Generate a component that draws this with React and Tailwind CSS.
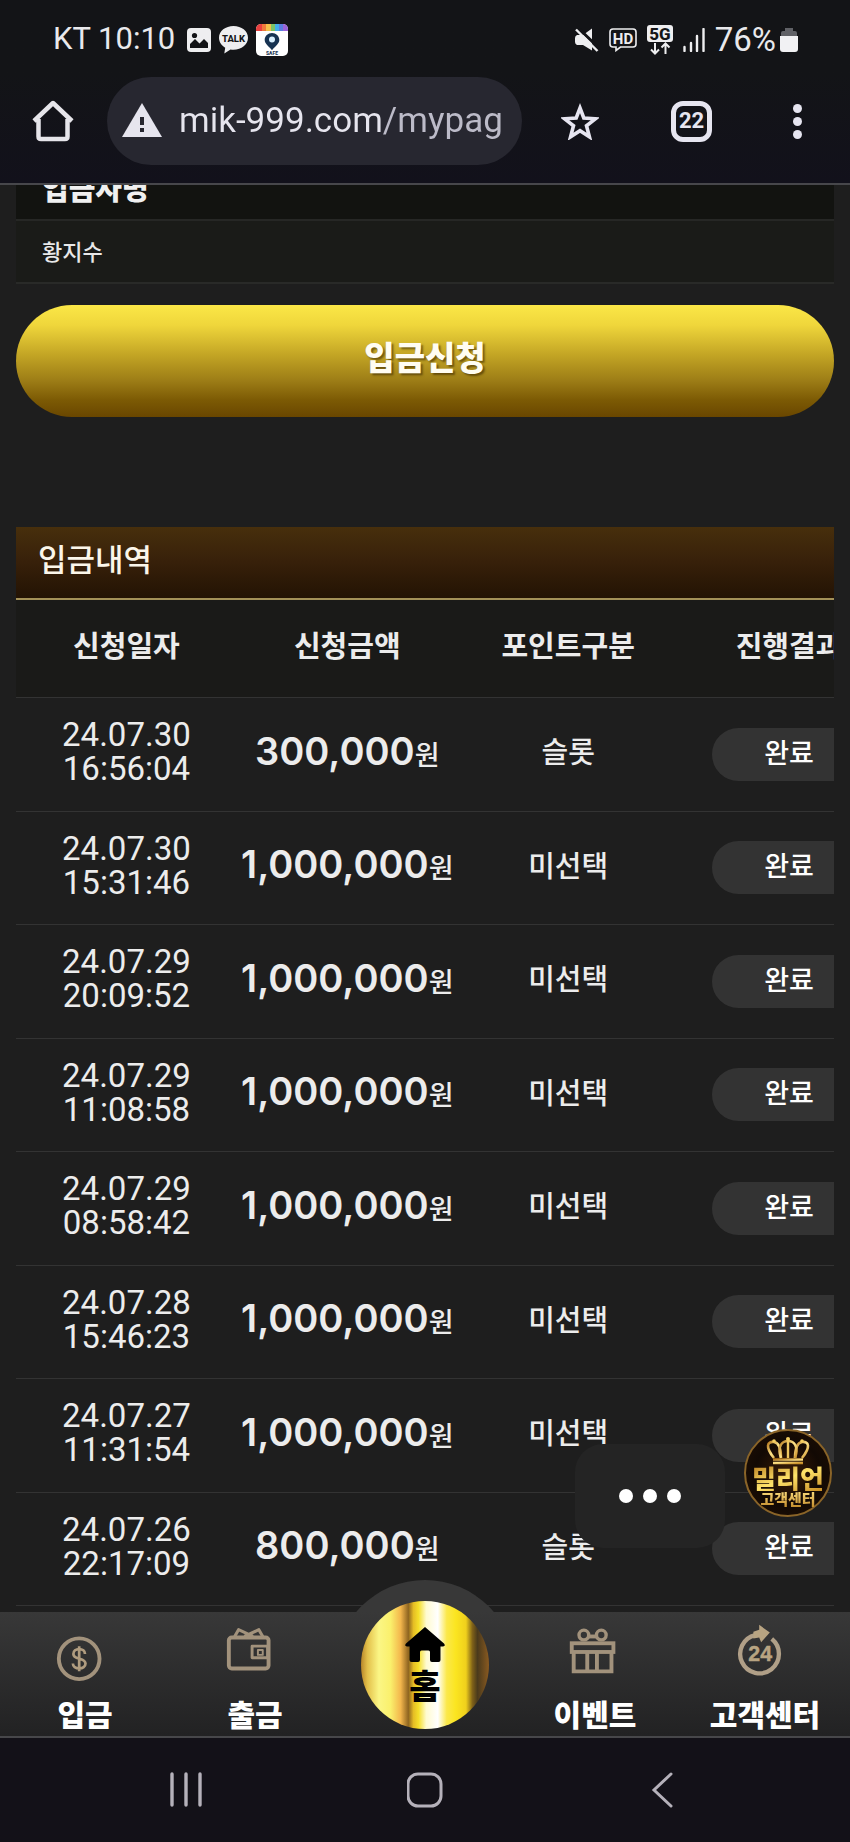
const deposits = [
  { date: '24.07.30', time: '16:56:04', amount: '300,000', type: '슬롯' },
  { date: '24.07.30', time: '15:31:46', amount: '1,000,000', type: '미선택' },
  { date: '24.07.29', time: '20:09:52', amount: '1,000,000', type: '미선택' },
  { date: '24.07.29', time: '11:08:58', amount: '1,000,000', type: '미선택' },
  { date: '24.07.29', time: '08:58:42', amount: '1,000,000', type: '미선택' },
  { date: '24.07.28', time: '15:46:23', amount: '1,000,000', type: '미선택' },
  { date: '24.07.27', time: '11:31:54', amount: '1,000,000', type: '미선택' },
  { date: '24.07.26', time: '22:17:09', amount: '800,000', type: '슬롯' },
]

const columns = ['신청일자', '신청금액', '포인트구분', '진행결과']

// ── Status bar icons ─────────────────────────────────────
const PictureIcon = () => (
  <svg className="h-6 w-6" viewBox="0 0 24 24" aria-hidden="true">
    <rect width="24" height="24" rx="4" fill="#eeeef0" />
    <circle cx="7.500" cy="7.500" r="2.600" fill="#131417" />
    <path d="M3 20v-4l5-5 4.500 4.500L17 11l4 4v5z" fill="#131417" />
  </svg>
)

const TalkIcon = () => (
  <svg className="h-7 w-[29px]" viewBox="0 0 29 28" aria-hidden="true">
    <path
      d="M14.500 0C6.500 0 0 5 0 11.800c0 4.200 2.500 7.800 6.200 9.900L5.300 27.600l6.200-4.200c1 .2 2 .3 3 .3C22.500 23.700 29 18.500 29 11.800 29 5 22.500 0 14.500 0z"
      fill="#eeeef0"
    />
    <text x="14.500" y="15.500" textAnchor="middle" fontFamily="Roboto, sans-serif" fontSize="9.500" fontWeight="800" fill="#131417">
      TALK
    </text>
  </svg>
)

const SafeIcon = () => (
  <svg className="h-8 w-8" viewBox="0 0 32 32" aria-hidden="true">
    <rect width="32" height="32" rx="5" fill="#ffffff" />
    <path d="M5 0h2v7H0V5a5 5 0 0 1 5-5z" fill="#e8403f" />
    <path d="M6 0h4v7H6z" fill="#ee7a3c" />
    <path d="M10 0h5v7h-5z" fill="#f2c04a" />
    <path d="M15 0h4v7h-4z" fill="#7cc466" />
    <path d="M19 0h4v7h-4z" fill="#43aee8" />
    <path d="M23 0h4v7h-4z" fill="#5b7de0" />
    <path d="M27 0a5 5 0 0 1 5 5v2h-5z" fill="#9a63d8" />
    <path d="M16 9c-4 0-7.300 3-7.300 7 0 3.600 3.500 5.600 7.300 10.200 3.800-4.600 7.300-6.600 7.300-10.200 0-4-3.300-7-7.300-7z" fill="#173352" />
    <circle cx="16" cy="15.500" r="3" fill="#d8f0ff" />
    <text x="16" y="30.500" textAnchor="middle" fontFamily="Roboto, sans-serif" fontSize="5" fontWeight="800" fill="#173352">
      SAFE
    </text>
  </svg>
)

const MuteIcon = () => (
  <svg className="h-6 w-6" viewBox="0 0 24 24" aria-hidden="true">
    <path d="M2 7h6l9-6.500v22L8 17H2q-2-1-2-3v-4q0-2 2-3z" fill="#eeeef0" />
    <path d="M2 -1L25 21" stroke="#131417" strokeWidth="3" />
    <path d="M1 1.500L22.500 23" stroke="#eeeef0" strokeWidth="2.400" />
  </svg>
)

const HdIcon = () => (
  <svg className="h-6 w-7" viewBox="0 0 28 24" aria-hidden="true">
    <path
      d="M4 1h20q3 0 3 3v12q0 3-3 3H11.500L7 22.500V19H4q-3 0-3-3V4q0-3 3-3z"
      fill="none"
      stroke="#eeeef0"
      strokeWidth="1.600"
    />
    <text x="14" y="15.500" textAnchor="middle" fontFamily="Roboto, sans-serif" fontSize="15" fontWeight="700" fill="#eeeef0">
      HD
    </text>
  </svg>
)

const FiveGIcon = () => (
  <svg className="h-[30px] w-[26px]" viewBox="0 0 26 30" aria-hidden="true">
    <rect width="26" height="17" rx="3" fill="#eeeef0" />
    <text x="13" y="14.500" textAnchor="middle" fontFamily="Roboto, sans-serif" fontSize="17" fontWeight="800" fill="#131417">
      5G
    </text>
    <path d="M8 18v10M4 24.500l4 4 4-4M18.500 29V19M14.500 22.500l4-4 4 4" fill="none" stroke="#eeeef0" strokeWidth="2" />
  </svg>
)

const SignalIcon = () => (
  <svg className="h-6 w-[22px]" viewBox="0 0 22 24" aria-hidden="true">
    <path d="M1.500 23v-4M8 23v-8M14 23V8M20.500 23V1" stroke="#eeeef0" strokeWidth="2.400" strokeLinecap="round" />
  </svg>
)

const BatteryIcon = () => (
  <svg className="h-[26px] w-[18px]" viewBox="0 0 18 26" aria-hidden="true">
    <path d="M5 1h8v3h2q2 0 2 2v4H1V6q0-2 2-2h2z" fill="#606166" />
    <path d="M0 9h18v13q0 3-3 3H3q-3 0-3-3z" fill="#f1f1f3" />
  </svg>
)

// ── Browser bar icons ────────────────────────────────────
const HomeOutlineIcon = () => (
  <svg className="h-[42px] w-[42px]" viewBox="0 0 42 42" aria-hidden="true">
    <path
      d="M2 21L21 3l19 18M6.500 19v17.500q0 2.500 2.500 2.500h24q2.500 0 2.500-2.500V19"
      fill="none"
      stroke="#e6e5ea"
      strokeWidth="4.500"
      strokeLinejoin="round"
    />
  </svg>
)

const WarningIcon = () => (
  <svg className="h-9 w-[42px] shrink-0" viewBox="0 0 42 36" aria-hidden="true">
    <path d="M21 0l20 34H1z" fill="#e6e5ee" />
    <path d="M21 14v8M21 25v4" stroke="#272730" strokeWidth="4" />
  </svg>
)

const StarIcon = () => (
  <svg className="h-[38px] w-[38px]" viewBox="0 0 38 38" aria-hidden="true">
    <path
      d="M19 6l3.800 10 11.700.8-9 7 2.900 11L19 28.700 9.600 34.800l2.900-11-9-7 11.700-.8z"
      fill="none"
      stroke="#e6e5f0"
      strokeWidth="3.600"
    />
  </svg>
)

// ── Bottom menu icons ────────────────────────────────────
const DepositIcon = () => (
  <svg className="h-16 w-16" viewBox="0 0 64 64" aria-hidden="true">
    <circle cx="26" cy="40" r="21" fill="none" stroke="#a2927c" strokeWidth="4" />
    <path
      d="M32 35c0-3-2.600-5-6-5s-6 2-6 5c0 6.500 12.500 3.500 12.500 10 0 3.200-2.800 5-6.500 5s-6.500-2-6.500-5M26 27v26"
      fill="none"
      stroke="#b09c7f"
      strokeWidth="2.800"
    />
  </svg>
)

const WithdrawIcon = () => (
  <svg className="h-16 w-16" viewBox="0 0 64 64" aria-hidden="true">
    <g fill="none" stroke="#a2927c" strokeWidth="4" strokeLinejoin="round">
      <rect x="5" y="18" width="41" height="32" rx="3" />
      <path d="M11 17l4-7 15 7M40 17l-4-7-15 7" strokeWidth="3.200" />
      <rect x="29" y="27" width="16" height="12" strokeWidth="3" />
      <rect x="35" y="31" width="5" height="5" strokeWidth="2" />
    </g>
  </svg>
)

const EventIcon = () => (
  <svg className="h-16 w-16" viewBox="0 0 64 64" aria-hidden="true">
    <g fill="none" stroke="#a2927c" strokeWidth="4">
      <rect x="8" y="24" width="43" height="9" />
      <path d="M10 33v20h39V33M24 33v20M34 33v20" />
      <circle cx="20.500" cy="15.500" r="5" strokeWidth="3.500" />
      <circle cx="38.500" cy="15.500" r="5" strokeWidth="3.500" />
      <path d="M25 17h9" />
    </g>
  </svg>
)

const SupportIcon = () => (
  <svg className="h-16 w-16" viewBox="0 0 64 64" aria-hidden="true">
    <path d="M39 19.500A20 20 0 1 1 22 15.500" fill="none" stroke="#b09f87" strokeWidth="4.500" />
    <path d="M26 5l11 8-9 10-2-5-6 1v-7l6-2z" fill="#b8a482" />
    <text x="27" y="42" textAnchor="middle" fontFamily="Liberation Sans, sans-serif" fontSize="22" fill="#b8a482" stroke="#b8a482" strokeWidth="0.500">
      24
    </text>
  </svg>
)

const HomeSolidIcon = () => (
  <svg className="h-9 w-10" viewBox="0 0 40 36" aria-hidden="true">
    <path
      d="M20 0l19 16.500q2 2.500-1 3h-2.500V33q0 2-2 2H27q-2 0-2-2v-8q0-1.500-1.500-1.500h-7Q15 23.500 15 25v8q0 2-2 2H6.500q-2 0-2-2V19.500H2q-3-.5-1-3z"
      fill="#000000"
    />
  </svg>
)

const CrownIcon = () => (
  <svg className="h-7 w-11" viewBox="0 0 44 28" aria-hidden="true">
    <defs>
      <linearGradient id="crown" x1="0" y1="0" x2="1" y2="1">
        <stop offset="0" stopColor="#b57a20" />
        <stop offset="0.500" stopColor="#ffe58a" />
        <stop offset="1" stopColor="#c98f28" />
      </linearGradient>
    </defs>
    <g fill="none" stroke="url(#crown)" strokeWidth="2.600">
      <path d="M8 21C-1 10 1 4 8 5c6 1 7 8 7 16" />
      <path d="M36 21c9-11 7-17 0-16-6 1-7 8-7 16" />
      <path d="M15 21c-4-12 1-17 7-17s11 5 7 17" />
      <path d="M7 22.500h30M7 26h30" />
    </g>
    <path d="M22 4v17" stroke="#f0c860" strokeWidth="2.400" />
    <g fill="#f5cf62">
      <circle cx="22" cy="2" r="2" />
      <circle cx="8" cy="4" r="1.800" />
      <circle cx="36" cy="4" r="1.800" />
    </g>
  </svg>
)

// ── Sub-components ───────────────────────────────────────
const MenuLink = ({ href, icon: Icon, children }) => (
  <a href={href} className="flex flex-1 flex-col items-center gap-2 pt-2 text-[30px] leading-[46px] font-black text-white">
    <Icon />
    {children}
  </a>
)

const StatusBar = () => (
  <div className="flex h-[77px] items-center justify-between pt-0.5 pr-[52px] pl-[53px] font-['Roboto',sans-serif] text-[#e9e9ec]">
    <div className="flex items-center gap-2">
      <span className="mr-1 text-[31px]">KT 10:10</span>
      <PictureIcon />
      <TalkIcon />
      <SafeIcon />
    </div>
    <div className="flex items-center gap-2.5">
      <MuteIcon />
      <HdIcon />
      <FiveGIcon />
      <SignalIcon />
      <div className="flex items-center gap-1">
        <span className="text-[33px]">76%</span>
        <BatteryIcon />
      </div>
    </div>
  </div>
)

const BrowserBar = () => (
  <div className="flex h-[106px] items-start pr-8 pl-8 font-['Roboto',sans-serif]">
    <button type="button" aria-label="홈" className="flex h-[88px] w-[42px] items-center">
      <HomeOutlineIcon />
    </button>
    <div className="ml-[33px] flex h-[88px] flex-1 items-center gap-4 rounded-full bg-[#272730] pr-3 pl-3.5">
      <WarningIcon />
      <input
        type="text"
        aria-label="주소"
        defaultValue="mik-999.com/mypag"
        className="w-full min-w-0 bg-[linear-gradient(90deg,#e6e5ee_202px,#bcbbc8_202px)] bg-clip-text text-[35px] leading-[48px] text-transparent outline-none"
      />
    </div>
    <div className="ml-[39px] flex h-[88px] w-[257px] items-center justify-between">
      <button type="button" aria-label="북마크">
        <StarIcon />
      </button>
      <button
        type="button"
        className="ml-2 flex h-[41px] w-[41px] items-center justify-center rounded-xl border-[5px] border-[#e6e5f0] text-[22px] leading-none font-bold text-[#e6e5f0]"
      >
        22
      </button>
      <button type="button" aria-label="메뉴" className="flex w-[42px] flex-col items-center gap-1">
        <span className="h-[9px] w-[9px] rounded-full bg-[#e6e5f0]" />
        <span className="h-[9px] w-[9px] rounded-full bg-[#e6e5f0]" />
        <span className="h-[9px] w-[9px] rounded-full bg-[#e6e5f0]" />
      </button>
    </div>
  </div>
)

const DepositTable = () => (
  <section className="mt-[110px] overflow-hidden">
    <h2 className="flex h-[73px] items-center border-b-2 border-[#a39158] bg-linear-to-b from-[#472f0c] via-[#37200a] to-[#231304] pb-2 pl-[22px] text-[31px] font-medium text-[#fbf6ea]">
      입금내역
    </h2>
    <table className="w-[108%] table-fixed border-collapse text-center text-[29px] text-[#ececec]">
      <thead>
        <tr className="h-[97px] border-b border-[#333333] bg-[#1a1a18]">
          {columns.map((name) => (
            <th key={name} className="pb-2 font-bold">
              {name}
            </th>
          ))}
        </tr>
      </thead>
      <tbody>
        {deposits.map((row) => (
          <tr key={row.date + row.time} className="h-[114px] border-b border-[#333333] even:h-[113px]">
            <td className="pb-1 font-['Roboto',sans-serif] text-[33px] leading-[34px]">
              <span className="block">{row.date}</span>
              <span className="block">{row.time}</span>
            </td>
            <td className="pb-1 leading-[40px] whitespace-nowrap">
              <span className="font-['Inter',sans-serif] text-[38px] font-semibold">{row.amount}</span>
              <span className="text-[27px] font-medium">원</span>
            </td>
            <td className="pb-1.5 font-medium">{row.type}</td>
            <td>
              <span className="mx-auto flex h-[53px] w-[154px] items-center justify-center rounded-full bg-[#333333] pb-1 text-[27px] font-medium text-white">
                완료
              </span>
            </td>
          </tr>
        ))}
      </tbody>
    </table>
  </section>
)

// Bump and gold disc rise above the bar
const HomeButton = () => (
  <div className="relative flex flex-1 justify-center">
    <div className="absolute -top-8 h-8 w-[180px] overflow-hidden">
      <div className="h-[180px] rounded-full bg-[#383838]" />
    </div>
    <a
      href="#home"
      className="absolute -top-[11px] flex h-32 w-32 flex-col items-center rounded-full bg-[linear-gradient(90deg,#b8862a_0%,#e3c04a_5%,#fbf685_14%,#faf06c_23%,#f3b64c_31%,#8f6520_37%,#e5bd24_41%,#f5df2a_45%,#fffbd0_51%,#ffffff_60%,#fbe84a_67%,#fbe520_74%,#f0d01c_82%,#806218_87%,#4a3a1c_91%,#8a5a20_100%)] pt-[26px] text-[34px] leading-[44px] font-black text-black"
    >
      <HomeSolidIcon />
      홈
    </a>
  </div>
)

const BottomMenu = () => (
  <nav className="relative flex h-[126px] border-b-2 border-[#47474a] bg-linear-to-b from-[#383838] to-[#222223]">
    <MenuLink href="#deposit" icon={DepositIcon}>입금</MenuLink>
    <MenuLink href="#withdraw" icon={WithdrawIcon}>출금</MenuLink>
    <HomeButton />
    <MenuLink href="#event" icon={EventIcon}>이벤트</MenuLink>
    <MenuLink href="#support" icon={SupportIcon}>고객센터</MenuLink>
  </nav>
)

const SystemBar = () => (
  <div className="flex h-[104px] items-start justify-between bg-[#131118] px-[168px] pt-[34px]">
    <button type="button" aria-label="최근 앱">
      <svg className="h-9 w-9" viewBox="0 0 36 36">
        <path d="M4 2v31M18 2v31M32 2v31" stroke="#b5b1ba" strokeWidth="3.400" strokeLinecap="round" />
      </svg>
    </button>
    <button type="button" aria-label="홈 화면">
      <svg className="h-9 w-9" viewBox="0 0 36 36">
        <rect x="1" y="2" width="33" height="32" rx="10" fill="none" stroke="#b5b1ba" strokeWidth="3" />
      </svg>
    </button>
    <button type="button" aria-label="뒤로">
      <svg className="h-9 w-9" viewBox="0 0 36 36">
        <path d="M25 2L8 18l17 16" fill="none" stroke="#b5b1ba" strokeWidth="3" strokeLinecap="round" />
      </svg>
    </button>
  </div>
)

// ── Main component ───────────────────────────────────────
export default function App() {
  return (
    <div className="flex h-screen w-full flex-col overflow-hidden bg-[#1e1e1e] font-['Noto_Sans_CJK_KR',sans-serif]">
      <header className="relative z-10 shrink-0 border-b-2 border-[#47474b] bg-linear-to-b from-[#131417] from-40% to-[#12111b]">
        <StatusBar />
        <BrowserBar />
      </header>

      <main className="relative min-h-0 flex-1">
        <div className="h-full overflow-hidden px-4">
          <form className="-mt-6">
            <label
              htmlFor="depositor"
              className="flex h-[60px] items-center border-b-2 border-[#262725] bg-[#121310] pb-1 pl-[26px] text-[29px] font-black text-[#f0f0f0]"
            >
              입금자명
            </label>
            <input
              id="depositor"
              type="text"
              defaultValue="황지수"
              className="block h-[63px] w-full border-b-2 border-[#292a28] bg-[#1a1b18] px-[26px] pb-1 text-[22px] font-medium text-[#e8e8e8] outline-none"
            />
            <button
              type="button"
              className="mt-[21px] block h-28 w-full rounded-full bg-[linear-gradient(180deg,#fbe747_0%,#efd63b_18%,#c2a424_45%,#9c7c16_68%,#7c5a04_85%,#694600_100%)] pb-2 text-[33px] font-black text-[#fffdf2] [text-shadow:2px_2px_2px_rgba(60,40,0,0.6)]"
            >
              입금신청
            </button>
          </form>
          <DepositTable />
        </div>

        {/* Floating typing bubble */}
        <div className="absolute right-[125px] bottom-16 flex h-[104px] w-[150px] items-center justify-center gap-2.5 rounded-[28px] bg-[#242424]">
          <span className="h-3.5 w-3.5 rounded-full bg-white" />
          <span className="h-3.5 w-3.5 rounded-full bg-white" />
          <span className="h-3.5 w-3.5 rounded-full bg-white" />
        </div>

        {/* Customer centre badge */}
        <a
          href="#support"
          className="absolute right-[18px] bottom-[95px] flex h-[88px] w-[88px] flex-col items-center rounded-full border-2 border-[#8a6428] bg-[radial-gradient(circle,#3a1c06_0%,#120904_55%,#1c0e04_85%,#5a3a12_100%)] pt-1.5"
        >
          <CrownIcon />
          <span className="bg-linear-to-br from-[#b97f1e] via-[#ffe36a] to-[#c98d20] bg-clip-text text-[26px] leading-[26px] font-black whitespace-nowrap text-transparent">
            밀리언
          </span>
          <span className="bg-linear-to-b from-[#fbdc7c] to-[#c58f2c] bg-clip-text text-[15px] leading-[16px] font-black whitespace-nowrap text-transparent">
            고객센터
          </span>
        </a>
      </main>

      <footer className="relative z-10 shrink-0">
        <BottomMenu />
        <SystemBar />
      </footer>
    </div>
  )
}
